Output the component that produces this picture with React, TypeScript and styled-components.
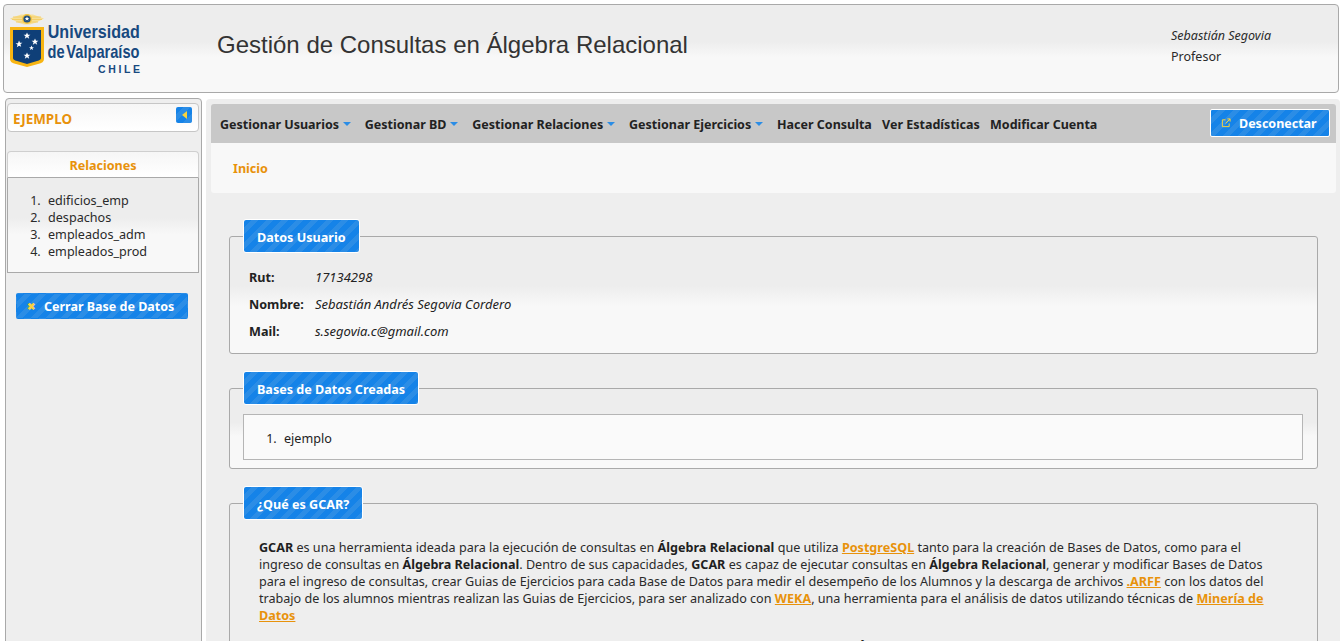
import React from "react";
import styled, { createGlobalStyle } from "styled-components";

const GlobalStyle = createGlobalStyle`
  html, body { margin: 0; height: 641px; overflow: hidden; background: #fff; }
  body { font-family: "Noto Sans", "Open Sans", sans-serif; font-size: 12.6px; color: #222; }
  * { box-sizing: border-box; }
`;

const sheen = `linear-gradient(#ededed 42%, #f8f8f8 60%)`;
const stripes = `repeating-linear-gradient(135deg, #1583e8 0 5.3px, #2b8de6 5.3px 10.6px)`;

const Page = styled.div`
  padding: 4px 3px 0;
  height: 641px;
  overflow: hidden;
  display: flex;
  flex-direction: column;
  gap: 5px;
`;

const Header = styled.header`
  flex: none;
  height: 89px;
  border: 1px solid #a9a9a9;
  border-radius: 4px;
  background: ${sheen};
  display: flex;
  align-items: stretch;
`;

const Logo = styled.div`
  width: 213px;
  flex: none;
  padding: 8px 0 0 6px;
  display: flex;
  gap: 4px;
`;

const LogoText = styled.div`
  display: flex;
  flex-direction: column;
  align-items: flex-end;
  padding-top: 9px;
  width: 92px;
  color: #17497f;
  font-family: "Liberation Sans", sans-serif;
  font-weight: 700;
`;

const LogoLine = styled.span<{ $squeeze: number; $tight?: boolean }>`
  font-size: 19px;
  line-height: 20px;
  white-space: nowrap;
  word-spacing: ${(p) => (p.$tight ? "-3px" : "0")};
  transform: scaleX(${(p) => p.$squeeze});
  transform-origin: right center;
`;

const LogoChile = styled.span`
  font-size: 10.5px;
  line-height: 14px;
  letter-spacing: 2.6px;
  margin-right: -2.6px;
`;

const Title = styled.h1`
  margin: 0;
  flex: 1;
  padding-top: 24px;
  font-family: "Liberation Sans", Arial, sans-serif;
  font-size: 24px;
  line-height: 32px;
  font-weight: 400;
  color: #333;
  white-space: nowrap;
`;

const UserBox = styled.div`
  width: 167px;
  flex: none;
  padding-top: 20px;
  font-size: 12.5px;
  line-height: 21px;
  color: #2a2a2a;
`;

const UserName = styled.div`
  font-style: italic;
`;

const Content = styled.div`
  flex: 1;
  min-height: 0;
  display: flex;
  gap: 4px;
  padding-left: 2px;
`;

const Sidebar = styled.aside`
  width: 197px;
  flex: none;
  height: 600px;
  border: 1px solid #a9a9a9;
  border-radius: 4px 4px 0 0;
  background: #eeeeee;
  padding: 4px 2px 0 1px;
  display: flex;
  flex-direction: column;
`;

const ProjectBar = styled.div`
  height: 29px;
  border: 1px solid #c6c6c6;
  border-radius: 4px;
  background: linear-gradient(#f6f6f6, #ffffff);
  display: flex;
  align-items: center;
  justify-content: space-between;
  padding: 0 6px 3px 5px;
`;

const ProjectName = styled.span`
  color: #e8920b;
  font-size: 13.4px;
  font-weight: 700;
  padding-top: 5px;
`;

const Toggle = styled.span`
  width: 16px;
  height: 16px;
  border-radius: 2px;
  background: ${stripes};
  display: flex;
  align-items: center;
  justify-content: center;
  margin-top: -2px;
`;

const ToggleArrow = styled.i`
  width: 0;
  height: 0;
  border-style: solid;
  border-width: 4px 5px 4px 0;
  border-color: transparent #f7d23e transparent transparent;
`;

const RelHead = styled.div`
  margin-top: 19px;
  height: 27px;
  border: 1px solid #cfcfcf;
  border-bottom: 1px solid #a9a9a9;
  border-radius: 4px 4px 0 0;
  background: linear-gradient(#f6f6f6, #ffffff);
  color: #e8920b;
  font-weight: 700;
  text-align: center;
  line-height: 28px;
`;

const RelList = styled.ol`
  margin: 0;
  height: 95px;
  border: 1px solid #a9a9a9;
  border-top: none;
  background: ${sheen};
  padding: 14px 0 0 36px;
  line-height: 17px;
  color: #2a2a2a;
`;

const ListRow = styled.li`
  padding-left: 4px;
`;

const StripeButton = styled.button<{ $wide?: boolean }>`
  border: 1px solid ${(p) => (p.$wide ? "#ffffff" : "transparent")};
  border-radius: 2px;
  background: ${stripes};
  color: #fff;
  font-family: inherit;
  font-size: 12.5px;
  font-weight: 700;
  display: flex;
  align-items: center;
  padding: 0;
`;

const CloseButton = styled(StripeButton)`
  width: 172px;
  height: 26px;
  margin: 20px 0 0 9px;
  padding-left: 10px;
  gap: 9px;
`;

const LogoutButton = styled(StripeButton)`
  width: 120px;
  height: 28px;
  margin-top: -2px;
  padding-left: 10px;
  gap: 8px;
`;

const CloseMark = styled.span`
  color: #f7d23e;
  font-size: 10px;
  font-weight: 700;
  line-height: 1;
`;

const Main = styled.main`
  flex: 1;
  min-width: 0;
  height: 600px;
  margin: 1px -1px 0 0;
  background: #eeeeee;
  border-radius: 4px 4px 0 0;
  padding: 5px 4px 0 5px;
`;

const MenuBar = styled.nav`
  height: 39px;
  border-radius: 3px 3px 0 0;
  background: #c8c8c8;
  display: flex;
  align-items: center;
  padding: 1px 6px 0 9px;
`;

const MenuItem = styled.span<{ $caret?: boolean }>`
  color: #222;
  font-size: 12.5px;
  font-weight: 700;
  white-space: nowrap;
  display: flex;
  align-items: center;
  gap: 4px;
  margin-right: ${(p) => (p.$caret ? 13.8 : 10.3)}px;
`;

const Caret = styled.i`
  width: 0;
  height: 0;
  border-style: solid;
  border-width: 4px 4.5px 0;
  border-color: #2b8de6 transparent transparent;
`;

const MenuSpacer = styled.div`
  flex: 1;
`;

const Crumbs = styled.div`
  height: 50px;
  background: #f8f8f8;
  border-radius: 0 0 3px 3px;
  padding: 17px 0 0 22px;
  color: #e8920b;
  font-weight: 700;
  line-height: 17px;
`;

const Stack = styled.div`
  padding: 26px 18px 0;
  display: flex;
  flex-direction: column;
  gap: 17px;
`;

const Panel = styled.fieldset<{ $flat?: boolean }>`
  margin: 0;
  min-width: 0;
  border: 1px solid #a9a9a9;
  border-radius: 3px;
  padding: 0 14px 8px 13px;
  background: ${(p) => (p.$flat ? "#eeeeee" : sheen)};
  background-clip: padding-box;
`;

const PanelTitle = styled.legend`
  margin-left: 0;
  height: 34px;
  padding: 0 13px;
  border: 1px solid #fff;
  border-radius: 3px;
  background: ${stripes};
  color: #fff;
  font-size: 12.6px;
  font-weight: 700;
  line-height: 35px;
`;

const InfoGrid = styled.dl`
  margin: 10px 0 1px 6px;
  display: grid;
  grid-template-columns: 66px 1fr;
  grid-auto-rows: 27px;
  align-items: center;
`;

const InfoLabel = styled.dt`
  padding-top: 2px;
  font-weight: 700;
`;

const InfoValue = styled.dd`
  margin: 0;
  font-size: 13px;
  font-style: italic;
`;

const DbBox = styled.ol`
  margin: 9px 0 0;
  height: 46px;
  border: 1px solid #b5b5b5;
  background: #fafafa;
  padding: 15px 0 0 36px;
  line-height: 17px;
`;

const Paragraph = styled.p`
  margin: 19px 0 0 16px;
  line-height: 17px;
  color: #2a2a2a;
  white-space: nowrap;
`;

const Strong = styled.b`
  color: #1f1f1f;
`;

const Link = styled.a`
  color: #e8920b;
  font-weight: 700;
  text-decoration: underline;
`;

const NextHeading = styled.h3`
  margin: 15px 0 0;
  padding-left: 14px;
  font-size: 13px;
  line-height: 17px;
  text-align: center;
  white-space: nowrap;
`;

const Crest = () => (
  <svg width="34" height="56" viewBox="0 0 34 56" style={{ flex: "none" }}>
    <path d="M0 5.500L11 1.500H23L34 5.500L26 9.500L20 11.500H14L8 9.500Z" fill="#f7df96" />
    <path d="M3 4H31M2 6.500H32M6 9H28" stroke="#f3c95a" strokeWidth="0.8" />
    <circle cx="17" cy="6" r="5" fill="#f3c441" />
    <circle cx="17" cy="6" r="3.600" fill="#23507f" />
    <path d="M0 14H34V46Q34 50 28 51L17 54L6 51Q0 50 0 46Z" fill="#f8b512" />
    <path d="M3 17H31V45Q31 47 27 48L17 51L7 48Q3 47 3 45Z" fill="#0f3f78" />
    <g fill="#fff">
      <path d="M17 19.500l1 2.300h2.400l-2 1.500.8 2.400-2.200-1.500-2.200 1.500.8-2.400-2-1.500H16z" />
      <path d="M9 27.500l1 2.300h2.400l-2 1.500.8 2.400L9 32.700l-2.200 1.500.8-2.400-2-1.500H8z" />
      <path d="M25 25.500l1 2.300h2.400l-2 1.500.8 2.400-2.200-1.500-2.200 1.500.8-2.400-2-1.500H24z" />
      <path d="M21.500 32.500l.7 1.700h1.800l-1.500 1.100.6 1.800-1.600-1.100-1.600 1.100.6-1.800-1.500-1.100h1.800z" />
      <path d="M17 39.500l1 2.300h2.400l-2 1.500.8 2.400-2.200-1.500-2.200 1.500.8-2.400-2-1.500H16z" />
      <path d="M17 3.500l.7 1.500h1.600l-1.300 1 .5 1.600L17 6.700l-1.500.9.500-1.600-1.300-1h1.600z" />
    </g>
  </svg>
);

const ExternalIcon = () => (
  <svg width="10" height="10" viewBox="0 0 11 11" fill="none" stroke="#f7d23e" strokeWidth="1.100" style={{ flex: "none" }}>
    <path d="M5 2H1.500V9.500H9V6" />
    <path d="M5 6L10 1M7 1H10V4" />
  </svg>
);

const relations = ["edificios_emp", "despachos", "empleados_adm", "empleados_prod"];
const menu: [string, boolean][] = [
  ["Gestionar Usuarios", true],
  ["Gestionar BD", true],
  ["Gestionar Relaciones", true],
  ["Gestionar Ejercicios", true],
  ["Hacer Consulta", false],
  ["Ver Estadísticas", false],
  ["Modificar Cuenta", false],
];
const info = [
  ["Rut:", "17134298"],
  ["Nombre:", "Sebastián Andrés Segovia Cordero"],
  ["Mail:", "s.segovia.c@gmail.com"],
];

export default function App() {
  return (
    <>
      <GlobalStyle />
      <Page>
        <Header>
          <Logo>
            <Crest />
            <LogoText>
              <LogoLine $squeeze={0.846}>Universidad</LogoLine>
              <LogoLine $squeeze={0.77} $tight>de Valparaíso</LogoLine>
              <LogoChile>CHILE</LogoChile>
            </LogoText>
          </Logo>
          <Title>Gestión de Consultas en Álgebra Relacional</Title>
          <UserBox>
            <UserName>Sebastián Segovia</UserName>
            <div>Profesor</div>
          </UserBox>
        </Header>
        <Content>
          <Sidebar>
            <ProjectBar>
              <ProjectName>EJEMPLO</ProjectName>
              <Toggle><ToggleArrow /></Toggle>
            </ProjectBar>
            <RelHead>Relaciones</RelHead>
            <RelList>
              {relations.map((r) => <ListRow key={r}>{r}</ListRow>)}
            </RelList>
            <CloseButton><CloseMark>✖</CloseMark>Cerrar Base de Datos</CloseButton>
          </Sidebar>
          <Main>
            <MenuBar>
              {menu.map(([label, caret]) => (
                <MenuItem key={label} $caret={caret}>
                  {label}
                  {caret && <Caret />}
                </MenuItem>
              ))}
              <MenuSpacer />
              <LogoutButton $wide><ExternalIcon />Desconectar</LogoutButton>
            </MenuBar>
            <Crumbs>Inicio</Crumbs>
            <Stack>
              <Panel>
                <PanelTitle>Datos Usuario</PanelTitle>
                <InfoGrid>
                  {info.map(([k, v]) => (
                    <React.Fragment key={k}>
                      <InfoLabel>{k}</InfoLabel>
                      <InfoValue>{v}</InfoValue>
                    </React.Fragment>
                  ))}
                </InfoGrid>
              </Panel>
              <Panel>
                <PanelTitle>Bases de Datos Creadas</PanelTitle>
                <DbBox><ListRow>ejemplo</ListRow></DbBox>
              </Panel>
              <Panel $flat>
                <PanelTitle>¿Qué es GCAR?</PanelTitle>
                <Paragraph>
                  <Strong>GCAR</Strong> es una herramienta ideada para la ejecución de consultas en <Strong>Álgebra Relacional</Strong> que utiliza <Link>PostgreSQL</Link> tanto para la creación de Bases de Datos, como para el<br />
                  ingreso de consultas en <Strong>Álgebra Relacional</Strong>. Dentro de sus capacidades, <Strong>GCAR</Strong> es capaz de ejecutar consultas en <Strong>Álgebra Relacional</Strong>, generar y modificar Bases de Datos<br />
                  para el ingreso de consultas, crear Guias de Ejercicios para cada Base de Datos para medir el desempeño de los Alumnos y la descarga de archivos <Link>.ARFF</Link> con los datos del<br />
                  trabajo de los alumnos mientras realizan las Guias de Ejercicios, para ser analizado con <Link>WEKA</Link>, una herramienta para el análisis de datos utilizando técnicas de <Link>Minería de</Link><br />
                  <Link>Datos</Link>
                </Paragraph>
                <NextHeading>Para utilizar GCAR es necesario conocer el Álgebra Relacional</NextHeading>
              </Panel>
            </Stack>
          </Main>
        </Content>
      </Page>
    </>
  );
}
